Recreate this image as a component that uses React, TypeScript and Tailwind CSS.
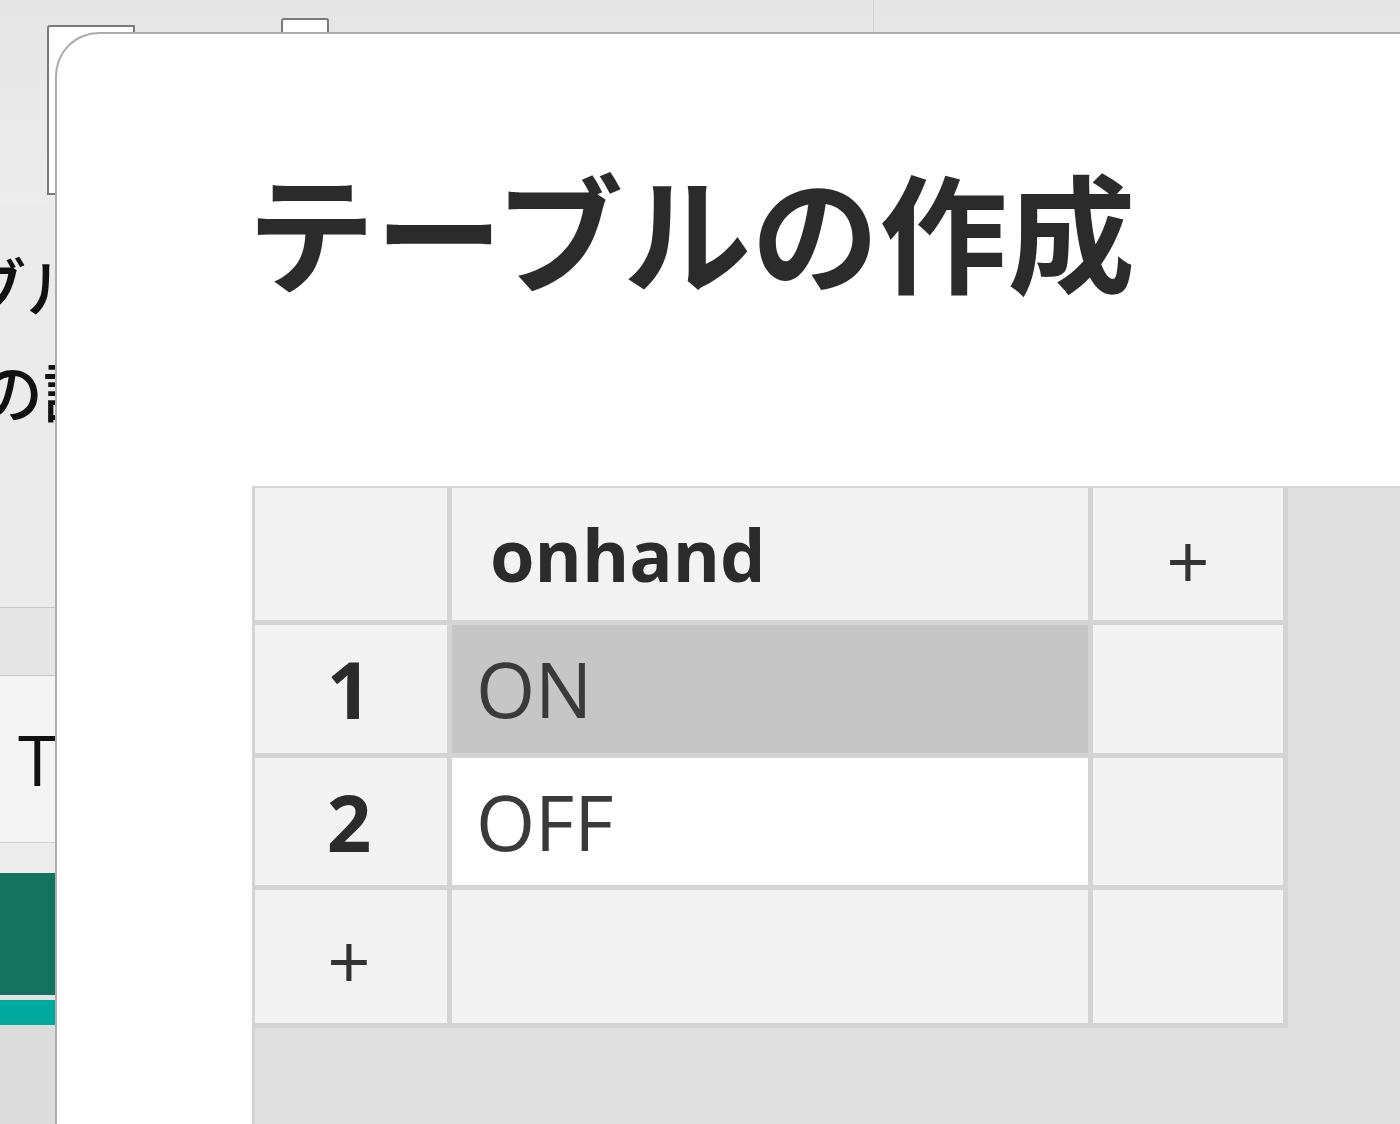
// テーブルの作成 dialog over the background app

const font = { fontFamily: '"Open Sans", "Noto Sans CJK JP", sans-serif' };

function Cell({
  children,
  className = "",
}: {
  children?: React.ReactNode;
  className?: string;
}) {
  return (
    <div
      className={`box-border flex items-center border-r-[5px] border-b-[5px] border-[#d4d4d4] ${className}`}
    >
      {children}
    </div>
  );
}

export default function App() {
  return (
    <div
      className="relative w-[1400px] h-[1124px] overflow-hidden bg-[#ebebeb] text-[#2b2b2b]"
      style={font}
    >
      {/* ===== background app ===== */}
      <div className="flex flex-col h-full">
        <div className="flex items-start h-[205px] bg-gradient-to-b from-[#e6e6e6] to-[#ececec]">
          <div className="ml-[47px] mt-[25px] w-[88px] h-[170px] border-2 border-[#7a7a7a] bg-white rounded-tl-[3px]" />
          <div className="ml-[146px] mt-[18px] w-[48px] h-[20px] border-2 border-[#7a7a7a] border-b-0 bg-white rounded-t-[3px]" />
          <div className="ml-[544px] w-px h-[33px] bg-[#d0d0d0]" />
        </div>

        <div className="h-[402px] overflow-hidden text-[64px] leading-[105px] text-[#111] font-medium whitespace-nowrap">
          <div className="ml-[-162px] mt-[30px]">テーブル</div>
          <div className="ml-[-21px]">の設定</div>
        </div>

        <div className="h-px bg-[#c8c8c8]" />
        <div className="h-[67px] bg-[#e6e6e6]" />
        <div className="h-px bg-[#c8c8c8]" />
        <div className="h-[166px] bg-[#f4f4f4] flex items-center">
          <span className="ml-[18px] text-[70px] leading-none text-[#111]">T</span>
        </div>
        <div className="h-px bg-[#cfcfcf]" />
        <div className="h-[30px] bg-[#ececec]" />
        <div className="h-[122px] bg-[#13735f]" />
        <div className="h-[5px] bg-[#e2e2e2]" />
        <div className="h-[25px] bg-[#00a99d]" />
        <div className="flex-1 bg-[#dcdcdc]" />
      </div>

      {/* ===== dialog ===== */}
      <div className="absolute left-[55px] top-[32px] right-0 bottom-0 flex flex-col bg-white border-l-2 border-t-2 border-[#adadad] rounded-tl-[44px]">
        <h1
          className="ml-[190px] mt-[131px] text-[128px] leading-none font-bold text-[#2b2b2b] whitespace-nowrap"
          style={{ fontFamily: '"Noto Sans CJK JP", sans-serif' }}
        >
          テーブルの作成
        </h1>

        <div className="ml-[195px] mt-[193px] flex-1 bg-[#e0e0e0] border-l-[3px] border-t-2 border-[#d4d4d4]">
          <div className="grid grid-cols-[197px_641px_195px]">
            {/* header row */}
            <Cell className="h-[137px] bg-[#f3f3f3]" />
            <Cell className="h-[137px] bg-[#f3f3f3] pl-[38px]">
              <span className="text-[72px] font-bold leading-none">onhand</span>
            </Cell>
            <Cell className="h-[137px] bg-[#f3f3f3] justify-center">
              <span className="text-[76px] leading-none pt-[14px] text-[#333]">+</span>
            </Cell>

            {/* row 1 */}
            <Cell className="h-[133px] bg-[#f3f3f3] justify-center">
              <span className="text-[78px] font-bold leading-none pr-[4px]">1</span>
            </Cell>
            <Cell className="h-[133px] bg-[#c6c6c6] pl-[24px]">
              <span className="text-[76px] leading-none text-[#3a3a3a]">ON</span>
            </Cell>
            <Cell className="h-[133px] bg-[#f3f3f3]" />

            {/* row 2 */}
            <Cell className="h-[132px] bg-[#f3f3f3] justify-center">
              <span className="text-[78px] font-bold leading-none pr-[4px]">2</span>
            </Cell>
            <Cell className="h-[132px] bg-white pl-[24px]">
              <span className="text-[76px] leading-none text-[#3a3a3a]">OFF</span>
            </Cell>
            <Cell className="h-[132px] bg-[#f3f3f3]" />

            {/* add row */}
            <Cell className="h-[138px] bg-[#f3f3f3] justify-center">
              <span className="text-[76px] leading-none pr-[4px] pt-[8px] text-[#333]">+</span>
            </Cell>
            <Cell className="h-[138px] bg-[#f3f3f3]" />
            <Cell className="h-[138px] bg-[#f3f3f3]" />
          </div>
        </div>
      </div>
    </div>
  );
}
